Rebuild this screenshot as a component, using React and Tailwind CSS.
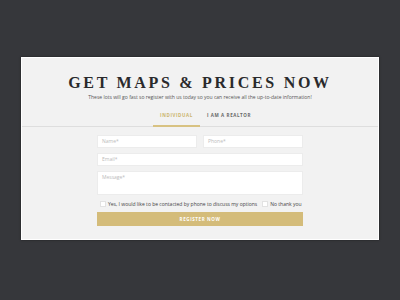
export default function App() {
  const sans = { fontFamily: '"Open Sans", "Liberation Sans", sans-serif' };

  return (
    <div className="w-[400px] h-[300px] bg-[#36373b] pt-[57px] overflow-hidden" style={sans}>
      <div className="mx-[21px] h-[183px] bg-[#f2f2f2] border border-white shadow-[0_0_2px_rgba(0,0,0,0.5)]">
        {/* Heading */}
        <h1
          className="pt-[17px] text-center text-[16px] leading-[16px] font-bold tracking-[2.7px] text-[#2a2a2c]"
          style={{ fontFamily: '"Liberation Serif", "DejaVu Serif", serif' }}
        >
          GET MAPS &amp; PRICES NOW
        </h1>
        <p className="mt-[3px] text-center text-[5px] leading-[7px] text-[#555]">
          These lots will go fast so register with us today so you can receive all the up-to-date information!
        </p>

        {/* Tabs */}
        <div className="mt-[11px] border-b border-[#dedede]">
          <div className="flex pl-[131px]">
            <div className="w-[47px] pb-[7px] border-b-2 border-[#d8c282] -mb-px text-center text-[4.5px] leading-[6px] font-bold tracking-[0.6px] text-[#cbb46c]">
              INDIVIDUAL
            </div>
            <div className="w-[58px] pb-[7px] text-center text-[4.5px] leading-[6px] font-bold tracking-[0.6px] text-[#666]">
              I AM A REALTOR
            </div>
          </div>
        </div>

        {/* Form */}
        <div className="mx-auto w-[206px] mt-[8px] flex flex-col gap-[5px]">
          <div className="flex gap-[6px]">
            <div className="flex-1 h-[13px] bg-white border border-[#ececec] px-[4px] text-[5px] leading-[11px] text-[#bbb]">
              Name*
            </div>
            <div className="flex-1 h-[13px] bg-white border border-[#ececec] px-[4px] text-[5px] leading-[11px] text-[#bbb]">
              Phone*
            </div>
          </div>
          <div className="h-[13px] bg-white border border-[#ececec] px-[4px] text-[5px] leading-[11px] text-[#bbb]">
            Email*
          </div>
          <div className="h-[24px] bg-white border border-[#ececec] px-[4px] pt-[1px] text-[5px] leading-[9px] text-[#bbb]">
            Message*
          </div>
          <div className="flex items-center h-[7px] pl-[3px] text-[5px] leading-[6px] text-[#444]">
            <span className="w-[6px] h-[6px] bg-white border border-[#e2e2e2] mr-[2px]" />
            <span>Yes, I would like to be contacted by phone to discuss my options</span>
            <span className="w-[6px] h-[6px] bg-white border border-[#e2e2e2] ml-[5px] mr-[2px]" />
            <span>No thank you</span>
          </div>
          <div className="h-[14px] bg-[#d4bc7a] flex items-center justify-center text-[4.5px] font-bold tracking-[0.6px] text-white">
            REGISTER NOW
          </div>
        </div>
      </div>
    </div>
  );
}
